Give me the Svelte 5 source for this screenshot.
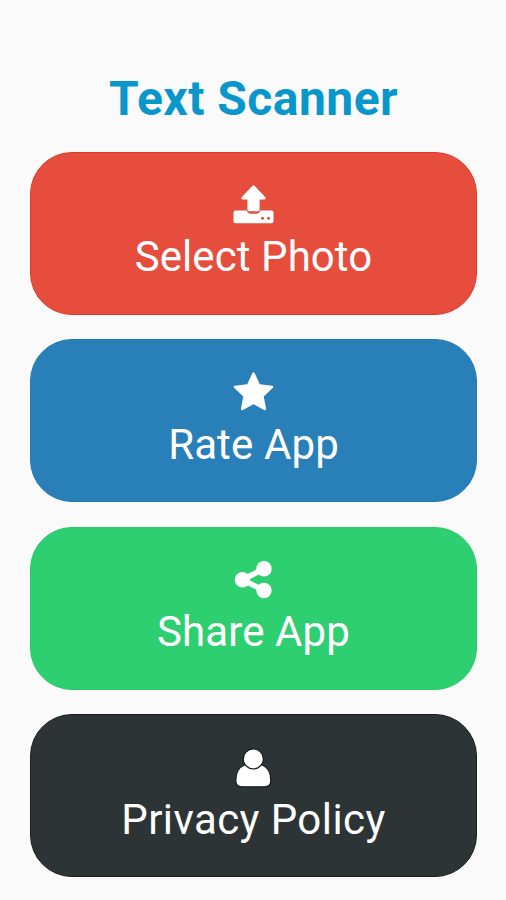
<script>
  const actions = [
    { label: 'Select Photo', icon: 'upload', color: '#e64d3d', edge: '#dd3929', spacing: 0.08 },
    { label: 'Rate App', icon: 'star', color: '#2980b9', edge: '#217bb6', spacing: 0.12 },
    { label: 'Share App', icon: 'share', color: '#2ecf71', edge: '#25cb6b', spacing: 0.12 },
    { label: 'Privacy Policy', icon: 'user', color: '#2d3436', edge: '#171e20', spacing: 0.42 }
  ];
</script>

<main>
  <h1>Text Scanner</h1>
  <nav>
    {#each actions as action}
      <button style="--fill: {action.color}; --edge: {action.edge}">
        <svg viewBox="0 0 60 60" width="60" height="60" aria-hidden="true">
          {#if action.icon === 'upload'}
            <path d="M12.5 35.5h11.300q1 3.200 4 3.200h5.400q3 0 4-3.200h11.300q2 0 2 2v8.700q0 2-2 2h-36q-2 0-2-2v-8.700q0-2 2-2z" />
            <path d="M31.300 10.600l10.800 11.500q1.500 2.300-1 2.300h-4.500v10.200q0 1.700-1.700 1.700h-8.800q-1.700 0-1.700-1.700V24.400h-4.500q-2.500 0-1-2.300l10.800-11.500q.8-.8 1.600 0z" />
            <circle class="cut" cx="39.500" cy="43.200" r="1.500" />
            <circle class="cut" cx="45.500" cy="43.200" r="1.500" />
          {:else if action.icon === 'star'}
            <path d="M31.600 10l5.200 11.200 12.400 1.500q2 .5.700 2l-9.200 8.900 2.400 12.200q0 2-1.900 1.300L30.500 41.200l-10.700 5.900q-1.900.7-1.900-1.300l2.400-12.200-9.200-8.900q-1.300-1.500.7-2l12.400-1.500L29.400 10q1.100-1.700 2.200 0z" />
          {:else if action.icon === 'share'}
            <path class="link" d="M41 18.800L19.500 29.800 41 40.500" />
            <circle cx="41" cy="18.800" r="7.700" />
            <circle cx="19.500" cy="29.800" r="7.700" />
            <circle cx="41" cy="40.500" r="7.700" />
          {:else}
            <path class="outlined" d="M21.500 27h17.600q8.700 3.500 8.700 15.500 0 6.300-6 6.300h-23q-6 0-6-6.300 0-12 8.700-15.500z" />
            <circle class="outlined" cx="30.300" cy="20.900" r="10" />
          {/if}
        </svg>
        <span style="letter-spacing: {action.spacing}px">{action.label}</span>
      </button>
    {/each}
  </nav>
</main>

<style>
  :global(body) {
    background: #fafafa;
  }
  main {
    box-sizing: border-box;
    height: 900px;
    padding: 71px 29px 0 30px;
    overflow: hidden;
    background: #fafafa;
    font-family: Roboto, sans-serif;
  }
  h1 {
    margin: 0;
    height: 80.700px;
    color: #0996ca;
    font-size: 48px;
    font-weight: 700;
    letter-spacing: 0.45px;
    line-height: 56px;
    text-align: center;
    white-space: nowrap;
  }
  nav {
    display: flex;
    flex-direction: column;
    gap: 24.500px;
  }
  button {
    display: flex;
    flex-direction: column;
    align-items: center;
    box-sizing: border-box;
    width: 447px;
    height: 163px;
    padding: 22.400px 0 0;
    border: 1px solid var(--edge);
    border-radius: 42px;
    background: var(--fill);
    color: #fff;
    font: 400 42px/50px Roboto, sans-serif;
    white-space: nowrap;
  }
  svg {
    display: block;
    flex: none;
    margin-right: 2px;
    fill: #fff;
  }
  span {
    margin-top: -3px;
  }
  .cut {
    fill: var(--fill);
  }
  .link {
    fill: none;
    stroke: #fff;
    stroke-width: 5.500;
  }
  .outlined {
    stroke: var(--edge);
    stroke-width: 1.200;
  }
</style>
